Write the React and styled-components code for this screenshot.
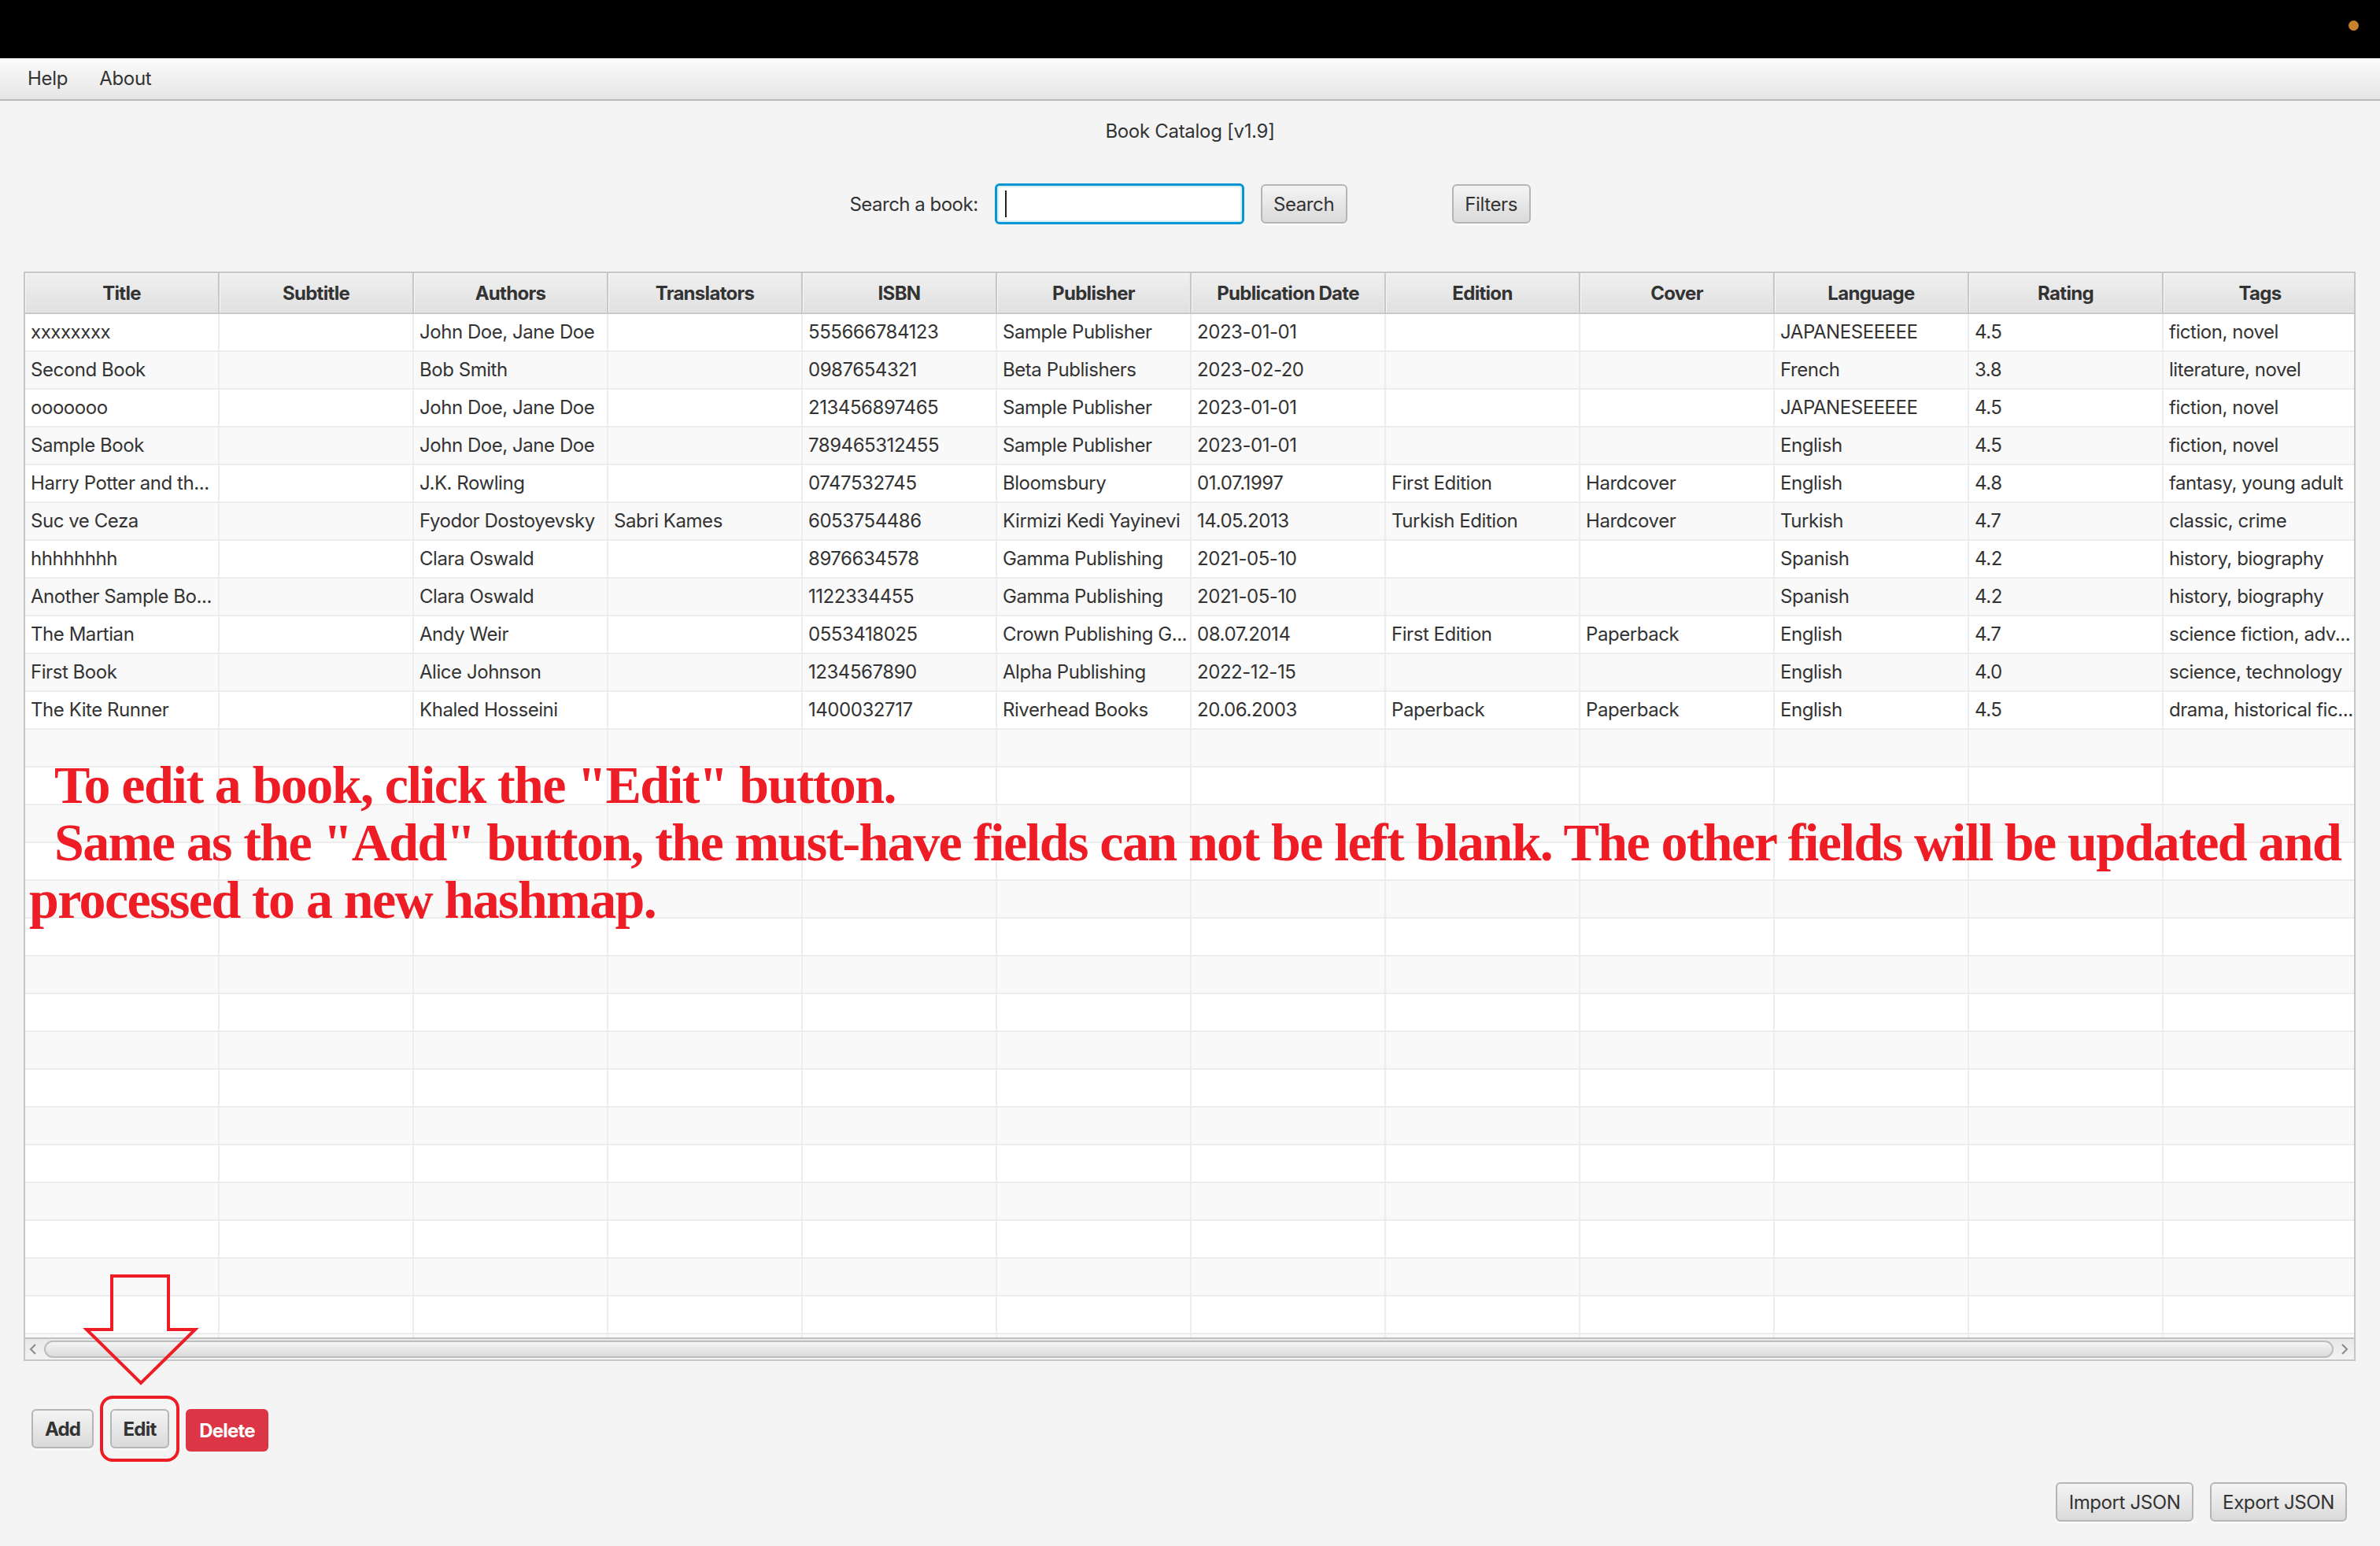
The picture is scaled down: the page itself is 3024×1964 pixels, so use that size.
import React from "react";
import styled, { createGlobalStyle } from "styled-components";

const GlobalStyle = createGlobalStyle`
  html, body {
    margin: 0;
    padding: 0;
    background: #f4f4f4;
  }
  body {
    font-family: Inter, "Noto Sans", Arial, sans-serif;
    color: #333;
  }
`;

const COLS = [
  "Title",
  "Subtitle",
  "Authors",
  "Translators",
  "ISBN",
  "Publisher",
  "Publication Date",
  "Edition",
  "Cover",
  "Language",
  "Rating",
  "Tags",
];

const books = [
  ["xxxxxxxx", "", "John Doe, Jane Doe", "", "555666784123", "Sample Publisher", "2023-01-01", "", "", "JAPANESEEEEE", "4.5", "fiction, novel"],
  ["Second Book", "", "Bob Smith", "", "0987654321", "Beta Publishers", "2023-02-20", "", "", "French", "3.8", "literature, novel"],
  ["ooooooo", "", "John Doe, Jane Doe", "", "213456897465", "Sample Publisher", "2023-01-01", "", "", "JAPANESEEEEE", "4.5", "fiction, novel"],
  ["Sample Book", "", "John Doe, Jane Doe", "", "789465312455", "Sample Publisher", "2023-01-01", "", "", "English", "4.5", "fiction, novel"],
  ["Harry Potter and th...", "", "J.K. Rowling", "", "0747532745", "Bloomsbury", "01.07.1997", "First Edition", "Hardcover", "English", "4.8", "fantasy, young adult"],
  ["Suc ve Ceza", "", "Fyodor Dostoyevsky", "Sabri Kames", "6053754486", "Kirmizi Kedi Yayinevi", "14.05.2013", "Turkish Edition", "Hardcover", "Turkish", "4.7", "classic, crime"],
  ["hhhhhhhh", "", "Clara Oswald", "", "8976634578", "Gamma Publishing", "2021-05-10", "", "", "Spanish", "4.2", "history, biography"],
  ["Another Sample Bo...", "", "Clara Oswald", "", "1122334455", "Gamma Publishing", "2021-05-10", "", "", "Spanish", "4.2", "history, biography"],
  ["The Martian", "", "Andy Weir", "", "0553418025", "Crown Publishing G...", "08.07.2014", "First Edition", "Paperback", "English", "4.7", "science fiction, adv..."],
  ["First Book", "", "Alice Johnson", "", "1234567890", "Alpha Publishing", "2022-12-15", "", "", "English", "4.0", "science, technology"],
  ["The Kite Runner", "", "Khaled Hosseini", "", "1400032717", "Riverhead Books", "20.06.2003", "Paperback", "Paperback", "English", "4.5", "drama, historical fic..."],
];

const Page = styled.div`
  width: 3024px;
  height: 1964px;
  display: flex;
  flex-direction: column;
  background: #f4f4f4;
  overflow: hidden;
`;

const TopBar = styled.div`
  height: 74px;
  flex-shrink: 0;
  box-sizing: border-box;
  background: #000;
  display: flex;
  justify-content: flex-end;
  align-items: flex-start;
  padding: 26px 27px 0 0;
`;

const Dot = styled.span`
  width: 13px;
  height: 13px;
  border-radius: 50%;
  background: #c8812f;
`;

const MenuBar = styled.div`
  height: 54px;
  flex-shrink: 0;
  box-sizing: border-box;
  display: flex;
  align-items: center;
  padding: 0 0 2px 15px;
  background: linear-gradient(#fbfbfb, #e6e6e6);
  border-bottom: 2px solid #b9b9b9;
`;

const MenuItem = styled.span`
  padding: 0 20px;
  font-size: 24px;
  letter-spacing: -0.3px;
  color: #333;
`;

const Title = styled.div`
  margin-top: 23px;
  text-align: center;
  font-size: 24px;
  line-height: 32px;
  letter-spacing: -0.3px;
  color: #333;
`;

const SearchRow = styled.div`
  margin-top: 50px;
  height: 52px;
  display: flex;
  justify-content: center;
  align-items: center;
`;

const SearchLabel = styled.span`
  font-size: 24px;
  letter-spacing: -0.5px;
  margin-right: 21px;
`;

const SearchBox = styled.div`
  width: 317px;
  height: 52px;
  box-sizing: border-box;
  display: flex;
  align-items: center;
  padding-left: 10px;
  background: #fff;
  border: 3px solid #0796d4;
  border-radius: 6px;
  box-shadow: inset 0 0 0 2px #dcedf6;
`;

const Caret = styled.span`
  width: 2px;
  height: 34px;
  background: #222;
`;

const Button = styled.button`
  width: ${(p) => p.$w}px;
  height: ${(p) => (p.$tall ? "54px" : "50px")};
  margin-left: ${(p) => p.$gap || 0}px;
  padding: 0;
  box-sizing: border-box;
  font-family: Inter, "Noto Sans", Arial, sans-serif;
  font-size: 24px;
  font-weight: ${(p) => (p.$bold ? 700 : 400)};
  letter-spacing: ${(p) => (p.$bold ? "-0.8px" : "-0.4px")};
  color: ${(p) => (p.$danger ? "#fff" : "#333")};
  background: ${(p) =>
    p.$danger ? "#dc3545" : "linear-gradient(#f4f4f4, #dadada)"};
  border: ${(p) => (p.$danger ? "none" : "2px solid #b5b5b5")};
  border-radius: 6px;
  box-shadow: ${(p) => (p.$danger ? "none" : "0 2px 0 #fafafa")};
  cursor: pointer;
`;

const TableWrap = styled.div`
  position: relative;
  margin: 60px 0 0 30px;
  width: 2963px;
  height: 1384px;
  flex-shrink: 0;
  box-sizing: border-box;
  border: 2px solid #c6c6c6;
  background: #fff;
  display: flex;
  flex-direction: column;
  overflow: hidden;
`;

const Grid = styled.div`
  display: grid;
  grid-template-columns: repeat(12, 247px);
  flex-shrink: 0;
`;

const HeadRow = styled(Grid)`
  height: 52px;
  box-sizing: border-box;
  border-bottom: 2px solid #c8c8c8;
`;

const HeadCell = styled.div`
  display: flex;
  align-items: center;
  justify-content: center;
  box-sizing: border-box;
  border-right: 2px solid #c8c8c8;
  background: linear-gradient(#f0f0f0, #e0e0e0);
  box-shadow: inset 1px 1px 0 #f8f8f8, inset -1px -1px 0 #e8e8e8;
  font-size: 24px;
  font-weight: 650;
  letter-spacing: -0.7px;
  color: #333;
`;

const Body = styled.div`
  height: 1300px;
  flex-shrink: 0;
  overflow: hidden;
`;

const Row = styled(Grid)`
  height: 48px;
  box-sizing: border-box;
  border-bottom: 2px solid #ededed;
  background: ${(p) => (p.$odd ? "#f9f9f9" : "#fff")};
`;

const Cell = styled.div`
  box-sizing: border-box;
  border-right: 2px solid #ededed;
  padding: 0 7px;
  font-size: 24px;
  line-height: 46px;
  letter-spacing: -0.45px;
  color: #333;
  white-space: nowrap;
  overflow: hidden;
`;

const HScroll = styled.div`
  height: 28px;
  flex-shrink: 0;
  box-sizing: border-box;
  border-top: 2px solid #c2c2c2;
  background: linear-gradient(#e8e8e8, #f3f3f3);
  display: flex;
  align-items: center;
  gap: 8px;
  padding: 0 6px 0 4px;
`;

const Thumb = styled.div`
  flex: 1;
  height: 22px;
  box-sizing: border-box;
  border: 2px solid #bdbdbd;
  border-radius: 11px;
  background: linear-gradient(#f4f4f4, #dcdcdc);
`;

const Annotation = styled.div`
  position: absolute;
  top: 614px;
  left: 5px;
  font-family: "Liberation Serif", "Times New Roman", serif;
  font-weight: 700;
  font-size: 68px;
  line-height: 73px;
  letter-spacing: -1.6px;
  color: #ee1c25;
  white-space: nowrap;
  pointer-events: none;
`;

const NoteLine = styled.div`
  padding-left: ${(p) => (p.$indent ? 32 : 0)}px;
`;

const Actions = styled.div`
  position: relative;
  margin-top: 61px;
  padding-left: 40px;
  height: 54px;
  flex-shrink: 0;
  display: flex;
  align-items: flex-start;
  gap: 21px;
`;

const Highlight = styled.div`
  position: relative;
  &::after {
    content: "";
    position: absolute;
    inset: -17px -13px;
    border: 4px solid #ee1c24;
    border-radius: 16px;
    pointer-events: none;
  }
`;

const Arrow = styled.svg`
  position: absolute;
  left: 108px;
  top: -171px;
  overflow: visible;
`;

const FileBar = styled.div`
  margin-top: 39px;
  padding-right: 42px;
  display: flex;
  justify-content: flex-end;
  gap: 21px;
`;

const Chevron = ({ dir }) => (
  <svg width="12" height="16" viewBox="0 0 12 16">
    <polyline
      points={dir === "left" ? "9,2 3,8 9,14" : "3,2 9,8 3,14"}
      fill="none"
      stroke="#8a8a8a"
      strokeWidth="2"
    />
  </svg>
);

const App = () => {
  const rows = [...books];
  while (rows.length < 28) rows.push(Array(12).fill(""));

  return (
    <Page>
      <GlobalStyle />
      <TopBar>
        <Dot />
      </TopBar>
      <MenuBar>
        <MenuItem>Help</MenuItem>
        <MenuItem>About</MenuItem>
      </MenuBar>

      <Title>Book Catalog [v1.9]</Title>

      <SearchRow>
        <SearchLabel>Search a book:</SearchLabel>
        <SearchBox>
          <Caret />
        </SearchBox>
        <Button $w={110} $gap={21}>Search</Button>
        <Button $w={100} $gap={133}>Filters</Button>
      </SearchRow>

      <TableWrap>
        <HeadRow>
          {COLS.map((c) => (
            <HeadCell key={c}>{c}</HeadCell>
          ))}
        </HeadRow>
        <Body>
          {rows.map((r, i) => (
            <Row key={i} $odd={i % 2 === 1}>
              {r.map((v, j) => (
                <Cell key={j}>{v}</Cell>
              ))}
            </Row>
          ))}
        </Body>
        <HScroll>
          <Chevron dir="left" />
          <Thumb />
          <Chevron dir="right" />
        </HScroll>

        <Annotation>
          <NoteLine $indent>To edit a book, click the "Edit" button.</NoteLine>
          <NoteLine $indent>
            Same as the "Add" button, the must-have fields can not be left blank. The other fields will be updated and
          </NoteLine>
          <NoteLine>processed to a new hashmap.</NoteLine>
        </Annotation>
      </TableWrap>

      <Actions>
        <Button $w={79} $bold>Add</Button>
        <Highlight>
          <Button $w={75} $bold>Edit</Button>
        </Highlight>
        <Button $w={105} $bold $danger $tall>
          Delete
        </Button>
        <Arrow width="142" height="140" viewBox="0 0 142 140">
          <polygon
            points="34,2 106,2 106,70 140,70 71,138 2,70 34,70"
            fill="none"
            stroke="#ee1c24"
            strokeWidth="4"
            strokeLinejoin="miter"
          />
        </Arrow>
      </Actions>

      <FileBar>
        <Button $w={175}>Import JSON</Button>
        <Button $w={174}>Export JSON</Button>
      </FileBar>
    </Page>
  );
};

export default App;
